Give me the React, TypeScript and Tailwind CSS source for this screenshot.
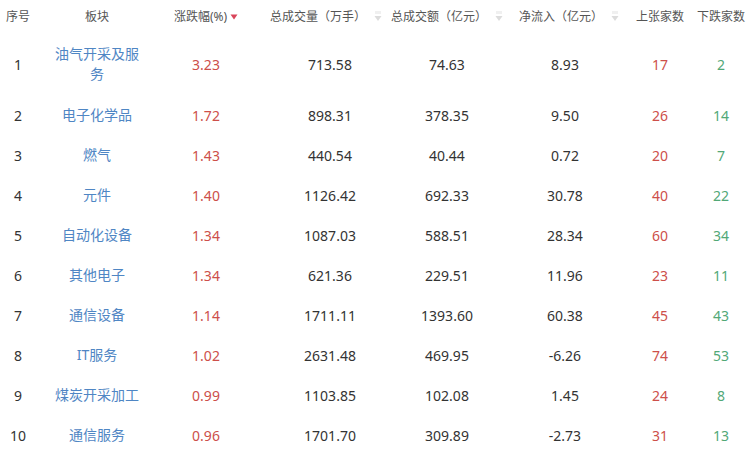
type Row = {
  name: string;
  pct: string;
  vol: string;
  amt: string;
  flow: string;
  up: number;
  down: number;
};

const ROWS: Row[] = [
  { name: '油气开采及服务', pct: '3.23', vol: '713.58', amt: '74.63', flow: '8.93', up: 17, down: 2 },
  { name: '电子化学品', pct: '1.72', vol: '898.31', amt: '378.35', flow: '9.50', up: 26, down: 14 },
  { name: '燃气', pct: '1.43', vol: '440.54', amt: '40.44', flow: '0.72', up: 20, down: 7 },
  { name: '元件', pct: '1.40', vol: '1126.42', amt: '692.33', flow: '30.78', up: 40, down: 22 },
  { name: '自动化设备', pct: '1.34', vol: '1087.03', amt: '588.51', flow: '28.34', up: 60, down: 34 },
  { name: '其他电子', pct: '1.34', vol: '621.36', amt: '229.51', flow: '11.96', up: 23, down: 11 },
  { name: '通信设备', pct: '1.14', vol: '1711.11', amt: '1393.60', flow: '60.38', up: 45, down: 43 },
  { name: 'IT服务', pct: '1.02', vol: '2631.48', amt: '469.95', flow: '-6.26', up: 74, down: 53 },
  { name: '煤炭开采加工', pct: '0.99', vol: '1103.85', amt: '102.08', flow: '1.45', up: 24, down: 8 },
  { name: '通信服务', pct: '0.96', vol: '1701.70', amt: '309.89', flow: '-2.73', up: 31, down: 13 },
];

// column widths chosen so that cell centres line up with the screenshot
const GRID = 'grid grid-cols-[36px_122px_96px_144px_98px_146px_36px_86px]';

function SortIcon({ active }: { active?: boolean }) {
  if (active) {
    return (
      <svg width="8" height="8" viewBox="0 0 8 8" className="ml-[3px] shrink-0">
        <path d="M0.5 1.5 L7.5 1.5 L4 6.5 Z" fill="#d9455a" />
      </svg>
    );
  }
  return (
    <svg width="8" height="12" viewBox="0 0 8 12" className="ml-[8px] shrink-0">
      <rect x="1" y="0" width="6" height="3" fill="#f0f0f0" />
      <path d="M0.5 5 L7.5 5 L4 10 Z" fill="#dcdcdc" />
    </svg>
  );
}

function Head({ label, sort }: { label: string; sort?: 'active' | 'idle' }) {
  return (
    <div className="flex items-center justify-center whitespace-nowrap">
      <span>{label}</span>
      {sort && <SortIcon active={sort === 'active'} />}
    </div>
  );
}

export default function App() {
  return (
    <div
      className="w-[754px] h-[452px] overflow-hidden bg-white text-[#333]"
      style={{ fontFamily: '"Noto Sans", "Noto Sans CJK SC", sans-serif' }}
    >
      <div className={`${GRID} h-[33px] items-center text-[12px] text-[#555]`}>
        <Head label="序号" />
        <Head label="板块" />
        <Head label="涨跌幅(%)" sort="active" />
        <Head label="总成交量（万手）" sort="idle" />
        <Head label="总成交额（亿元）" sort="idle" />
        <Head label="净流入（亿元）" sort="idle" />
        <Head label="上张家数" />
        <Head label="下跌家数" />
      </div>

      {ROWS.map((r, i) => (
        <div
          key={r.name}
          className={`${GRID} items-center text-center text-[14px] ${i === 0 ? 'h-[62px]' : 'h-[40px]'}`}
        >
          <div>{i + 1}</div>
          <div className="px-[14px] leading-[20px] text-[#4f86c4]">{r.name}</div>
          <div className="text-[#cd4f4a]">{r.pct}</div>
          <div className="pl-[8px]">{r.vol}</div>
          <div>{r.amt}</div>
          <div className="pr-[8px]">{r.flow}</div>
          <div className="text-[#cd4f4a]">{r.up}</div>
          <div className="text-[#52a877]">{r.down}</div>
        </div>
      ))}
    </div>
  );
}
